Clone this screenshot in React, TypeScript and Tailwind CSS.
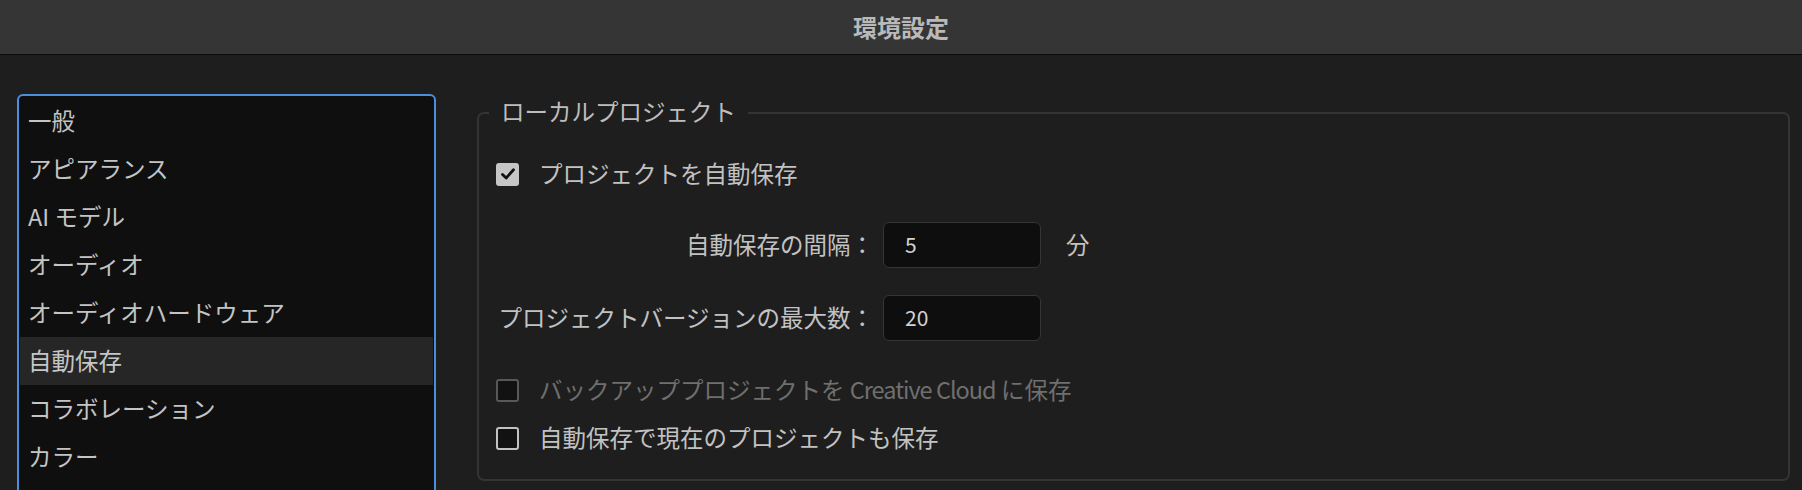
import React from "react";

const items = [
  "一般",
  "アピアランス",
  "AI モデル",
  "オーディオ",
  "オーディオハードウェア",
  "自動保存",
  "コラボレーション",
  "カラー",
];

function CheckBox({ checked, disabled }: { checked?: boolean; disabled?: boolean }) {
  if (checked) {
    return (
      <div className="w-[23px] h-[23px] rounded-[3px] bg-[#c6c6c6] flex items-center justify-center shrink-0">
        <svg width="16" height="16" viewBox="0 0 16 16">
          <polyline points="2.5,8.5 6.2,12 13.5,3.8" fill="none" stroke="#111" strokeWidth="2.8" strokeLinecap="round" strokeLinejoin="round" />
        </svg>
      </div>
    );
  }
  return (
    <div
      className={
        disabled
          ? "w-[23px] h-[23px] rounded-[3px] border-2 border-[#585858] bg-[#121212] shrink-0"
          : "w-[23px] h-[23px] rounded-[3px] border-[2.5px] border-[#c2c2c2] bg-[#121212] shrink-0"
      }
    />
  );
}

export default function App() {
  const font = { fontFamily: '"Noto Sans CJK JP", "Noto Sans", sans-serif' };
  return (
    <div className="w-[1802px] h-[490px] bg-[#1e1e1e] overflow-hidden flex flex-col" style={font}>
      <div className="h-[55px] shrink-0 bg-[#353535] border-b border-[#0b0b0b] flex items-center justify-center">
        <span className="text-[24px] font-bold text-[#b9b9b9] leading-none">環境設定</span>
      </div>
      <div className="flex pl-[17px] gap-[41px]">
        <div className="mt-[39px] w-[419px] h-[440px] border-2 border-[#4b8fdc] rounded-[6px] bg-[#0f0f0f] p-[1px] flex flex-col overflow-hidden shrink-0">
          {items.map((it) => (
            <div
              key={it}
              className={
                it === "自動保存"
                  ? "h-[48px] shrink-0 flex items-center pl-[8px] bg-[#262626] text-[23.5px] text-[#c6c6c6]"
                  : "h-[48px] shrink-0 flex items-center pl-[8px] text-[23.5px] text-[#c4c4c4]"
              }
            >
              {it}
            </div>
          ))}
        </div>
        <fieldset className="mt-[41px] w-[1313px] h-[385px] border-2 border-[#343434] rounded-[7px] p-0 m-0 shrink-0">
          <legend className="ml-[10px] px-[12px] pb-[4px] text-[23.5px] leading-[30px] text-[#bdbdbd]">ローカルプロジェクト</legend>
          <div className="pl-[17px] flex flex-col">
            <div className="mt-[27px] h-[34px] flex items-center gap-[20px]">
              <CheckBox checked />
              <span className="text-[23.5px] text-[#c2c2c2]">プロジェクトを自動保存</span>
            </div>
            <div className="mt-[31px] h-[46px] flex items-center">
              <div className="w-[378px] text-right text-[23.5px] text-[#c2c2c2] shrink-0">自動保存の間隔：</div>
              <div className="ml-[9px] w-[158px] h-[46px] rounded-[6px] border border-[#353535] bg-[#0e0e0e] flex items-center pl-[21px] text-[21px] text-[#d2d2d2] shrink-0">
                5
              </div>
              <span className="ml-[25px] text-[23.5px] text-[#c2c2c2]">分</span>
            </div>
            <div className="mt-[27px] h-[46px] flex items-center">
              <div className="w-[378px] text-right text-[23.5px] text-[#c2c2c2] shrink-0">プロジェクトバージョンの最大数：</div>
              <div className="ml-[9px] w-[158px] h-[46px] rounded-[6px] border border-[#353535] bg-[#0e0e0e] flex items-center pl-[21px] text-[21px] text-[#d2d2d2] shrink-0">
                20
              </div>
            </div>
            <div className="mt-[32px] h-[34px] flex items-center gap-[20px]">
              <CheckBox disabled />
              <span className="text-[23.5px] text-[#6f6f6f]">
                バックアッププロジェクトを <span className="tracking-[-1px]">Creative Cloud</span> に保存
              </span>
            </div>
            <div className="mt-[14px] h-[34px] flex items-center gap-[20px]">
              <CheckBox />
              <span className="text-[23.5px] text-[#c2c2c2]">自動保存で現在のプロジェクトも保存</span>
            </div>
          </div>
        </fieldset>
      </div>
    </div>
  );
}
